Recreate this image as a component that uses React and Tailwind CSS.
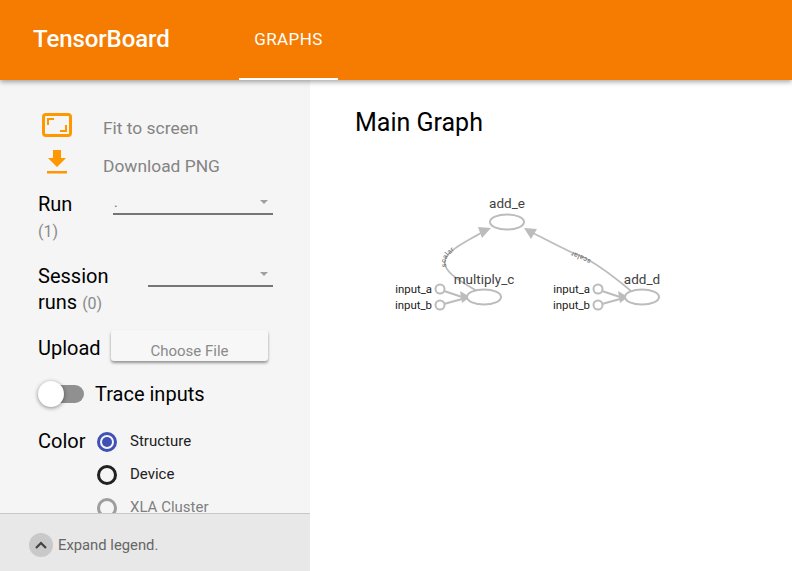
export default function App() {
  const gray = "#bcbcbc";
  const node = (cx, cy, label, ly) => (
    <g>
      <ellipse cx={cx} cy={cy} rx="17" ry="7.5" fill="#fff" stroke={gray} strokeWidth="2" />
      <text x={cx} y={ly} textAnchor="middle" fontSize="13.5" fill="#424242" fontFamily="Roboto, sans-serif">{label}</text>
    </g>
  );
  const inputs = (x, tipX) => (
    <g>
      <path d={`M${x + 4},291 L${tipX - 6},297 M${x + 4},304 L${tipX - 6},299`} stroke={gray} strokeWidth="2" fill="none" />
      <polygon points={`${tipX + 2},297 ${tipX - 8},291 ${tipX - 6},303`} fill={gray} />
      <circle cx={x} cy="289" r="4.5" fill="#fff" stroke={gray} strokeWidth="2" />
      <circle cx={x} cy="305" r="4.5" fill="#fff" stroke={gray} strokeWidth="2" />
      <text x={x - 8} y="293" textAnchor="end" fontSize="11.4" fill="#212121" fontFamily="Roboto, sans-serif">input_a</text>
      <text x={x - 8} y="309" textAnchor="end" fontSize="11.4" fill="#212121" fontFamily="Roboto, sans-serif">input_b</text>
    </g>
  );
  const Radio = ({ color, text, textColor, dot }) => (
    <div className="flex items-center h-[33px]">
      <span className="w-5 h-5 rounded-full border-[3px] flex items-center justify-center" style={{ borderColor: color }}>
        {dot && <span className="w-[10px] h-[10px] rounded-full bg-[#3f51b5]" />}
      </span>
      <span className="ml-[13px] text-[15px]" style={{ color: textColor }}>{text}</span>
    </div>
  );
  return (
    <div className="w-[792px] h-[571px] relative overflow-hidden bg-white flex flex-col font-['Roboto',sans-serif]">
      <header className="h-20 shrink-0 bg-[#f57c00] text-white flex items-stretch relative z-10 shadow-[0_2px_5px_rgba(0,0,0,0.35)]">
        <div className="ml-[33px] w-[206px] text-2xl font-medium tracking-[-0.1px] leading-[78px]">TensorBoard</div>
        <div className="w-[99px] border-b-2 border-white text-center text-[17px] tracking-[0.4px] font-normal leading-[78px]">GRAPHS</div>
      </header>
      <div className="flex flex-1 min-h-0">
        <aside className="w-[310px] shrink-0 bg-[#f5f5f5] flex flex-col">
          <div className="flex-1 min-h-0 overflow-hidden pl-[38px] pr-[37px] pt-[33px]">
            <div className="flex items-center h-[30px] text-[17.4px] text-[#848484] -ml-[38px] pl-[42px]">
              <svg width="30" height="24" viewBox="0 0 30 24" fill="none" className="shrink-0 -mt-[7px]">
                <rect x="1.5" y="1.5" width="27" height="21" rx="2.5" stroke="#ff9800" strokeWidth="3" />
                <path d="M5 12V5h7v2H7v5zM25 12v7h-7v-2h5v-5z" fill="#ff9800" />
              </svg>
              <span className="ml-[31px]">Fit to screen</span>
            </div>
            <div className="flex items-center h-[30px] mt-2 text-[17.4px] text-[#848484] -ml-[38px] pl-[47px]">
              <svg width="20" height="24" viewBox="0 0 20 24" className="shrink-0 -mt-[8px]">
                <path d="M6 0h8v8h5L10 17 1 8h5zM0 21h20v2.5H0z" fill="#ff9800" />
              </svg>
              <span className="ml-[36px]">Download PNG</span>
            </div>
            <div className="flex mt-[10px] h-[58px]">
              <div className="w-[75px] text-xl leading-[26px]">
                Run
                <div className="text-base text-[#8a8a8a] leading-[26px] mt-[2px]">(1)</div>
              </div>
              <div className="flex-1 h-[24px] border-b-2 border-[#757575] relative text-sm text-[#666] leading-[22px] ml-0">
                <span className="ml-px">.</span>
                <span className="absolute right-[5px] top-[9px] border-x-[4px] border-x-transparent border-t-[4px] border-t-[#a0a0a0]" />
              </div>
            </div>
            <div className="flex mt-[14px] h-[52px]">
              <div className="w-[110px] text-xl leading-[26px] whitespace-nowrap">
                Session<br />runs <span className="text-base text-[#8a8a8a]">(0)</span>
              </div>
              <div className="flex-1 h-[24px] border-b-2 border-[#757575] relative">
                <span className="absolute right-[5px] top-[9px] border-x-[4px] border-x-transparent border-t-[4px] border-t-[#a0a0a0]" />
              </div>
            </div>
            <div className="flex items-center mt-[14px] h-[32px]">
              <div className="w-[73px] text-xl pt-[5px]">Upload</div>
              <div className="w-[157px] h-[31px] bg-[#f7f7f7] rounded-[3px] shadow-[0_2px_3px_rgba(0,0,0,0.4)] text-center text-[15px] text-[#8a8a8a] pt-[13px] leading-[17px]">Choose File</div>
            </div>
            <div className="flex items-center mt-[20px] h-[26px]">
              <div className="relative w-[46px] h-[26px] shrink-0">
                <div className="absolute left-[10px] right-0 top-[4px] h-[18px] rounded-full bg-[#909090]" />
                <div className="absolute left-0 top-0 w-[26px] h-[26px] rounded-full bg-white shadow-[0_1px_4px_rgba(0,0,0,0.45)]" />
              </div>
              <span className="ml-[11px] text-xl">Trace inputs</span>
            </div>
            <div className="flex mt-[21px]">
              <div className="w-[59px] text-xl leading-[26px]">Color</div>
              <div className="-mt-[3px]">
                <Radio color="#3f51b5" text="Structure" textColor="#212121" dot />
                <Radio color="#212121" text="Device" textColor="#212121" />
                <Radio color="#9e9e9e" text="XLA Cluster" textColor="#808080" />
              </div>
            </div>
          </div>
          <div className="h-[58px] shrink-0 bg-[#e8e8e8] border-t border-[#c8c8c8] flex items-center pl-[29px] pt-[5px] text-[14.8px] text-[#666]">
            <span className="w-6 h-6 rounded-full bg-[#c9c9c9] flex items-center justify-center">
              <svg width="14" height="10" viewBox="0 0 14 10" fill="none">
                <path d="M2 8l5-5 5 5" stroke="#424242" strokeWidth="2.2" />
              </svg>
            </span>
            <span className="ml-[5px]">Expand legend.</span>
          </div>
        </aside>
        <main className="flex-1 min-w-0 pt-[28px]">
          <h1 className="ml-[45px] text-[25px] font-normal leading-[30px] text-black">Main Graph</h1>
          <svg width="482" height="200" viewBox="310 160 482 200" className="block mt-[22px]">
            <path id="e1" d="M477,291 C462,282 442,272 445,260 C447,250 470,240 484,231" fill="none" stroke={gray} strokeWidth="1.7" />
            <polygon points="491,228 478,227 482,238" fill={gray} />
            <path id="e2" d="M631,291 C612,275 590,258 573,253 C558,246 545,239 531,232" fill="none" stroke={gray} strokeWidth="1.7" />
            <polygon points="524,228 537,229 531,239" fill={gray} />
            <text fontSize="7" fill="#666" letterSpacing="0.4" fontFamily="Roboto, sans-serif" dy="1">
              <textPath href="#e1" startOffset="40">scalar</textPath>
            </text>
            <text fontSize="7" fill="#666" letterSpacing="0.4" fontFamily="Roboto, sans-serif" dy="1">
              <textPath href="#e2" startOffset="50">scalar</textPath>
            </text>
            {inputs(440, 468)}
            {inputs(598, 626)}
            {node(507, 222, "add_e", 208)}
            {node(484, 297, "multiply_c", 284)}
            {node(642, 297, "add_d", 284)}
          </svg>
        </main>
      </div>
    </div>
  );
}
